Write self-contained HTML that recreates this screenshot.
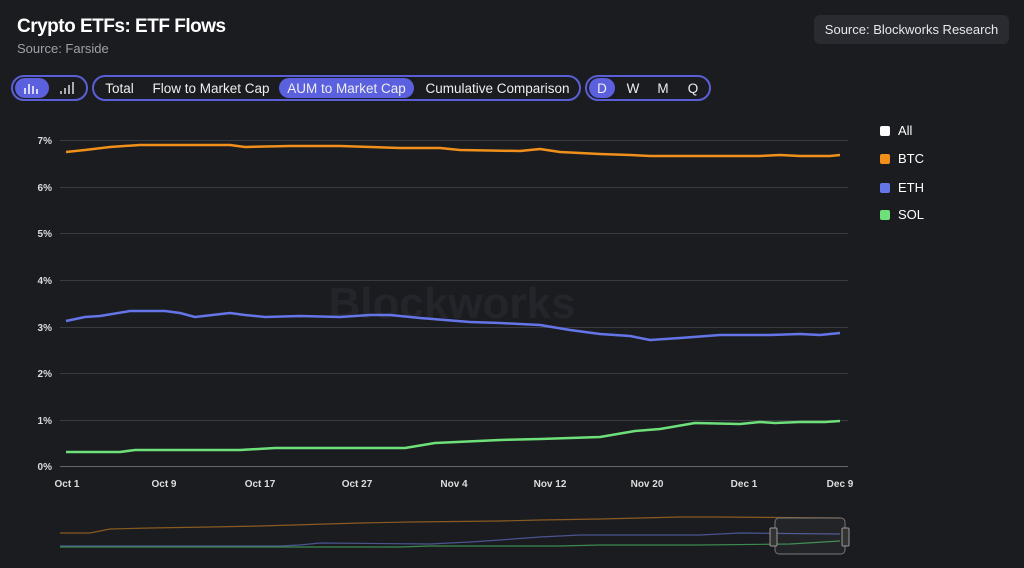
<!DOCTYPE html>
<html><head><meta charset="utf-8"><style>
body{margin:0;width:1024px;height:568px;background:#1b1c20;font-family:"Liberation Sans",sans-serif;overflow:hidden;position:relative;color:#fff}
.t{position:absolute;left:17px;top:16px;font-size:19px;font-weight:bold;letter-spacing:-0.5px}
.s{position:absolute;left:17px;top:41px;font-size:13px;color:#a0a0a8}
.src{position:absolute;left:814px;top:15px;width:195px;height:29px;background:#2a2b31;border-radius:6px;font-size:13px;line-height:29px;text-align:center;color:#e8e8ea}
.grp{position:absolute;top:75px;height:26px;border:2px solid #5b5fd6;border-radius:14px;box-sizing:border-box}
.b{position:absolute;top:78px;height:20px;line-height:22px;font-size:13.5px;color:#eee;white-space:nowrap;text-align:center}
.on{background:#5b61de;border-radius:10px}
.lg{position:absolute;left:880px;font-size:13px;display:flex;align-items:center}
.lg i{width:10px;height:10px;border-radius:2px;margin-right:8px;display:inline-block}
</style></head><body>
<div class="t">Crypto ETFs: ETF Flows</div>
<div class="s">Source: Farside</div>
<div class="src">Source: Blockworks Research</div>
<div class="grp" style="left:11px;width:77px"></div>
<div class="grp" style="left:92px;width:489px"></div>
<div class="grp" style="left:585px;width:126px"></div>
<div class="b on" style="left:15px;width:34px"><svg width="20" height="14" style="margin-top:3px"><g stroke="#fff" stroke-width="1.5"><line x1="3" y1="13" x2="3" y2="7"/><line x1="7" y1="13" x2="7" y2="3"/><line x1="11" y1="13" x2="11" y2="5"/><line x1="15" y1="13" x2="15" y2="8"/></g></svg></div>
<div class="b" style="left:56px;width:24px"><svg width="20" height="14" style="margin-top:3px"><g stroke="#ddd" stroke-width="1.5"><line x1="3" y1="13" x2="3" y2="10"/><line x1="7" y1="13" x2="7" y2="7"/><line x1="11" y1="13" x2="11" y2="4"/><line x1="15" y1="13" x2="15" y2="1"/></g></svg></div>
<div class="b" style="left:103px;width:33px">Total</div>
<div class="b" style="left:150px;width:122px">Flow to Market Cap</div>
<div class="b on" style="left:279px;width:135px">AUM to Market Cap</div>
<div class="b" style="left:424px;width:147px">Cumulative Comparison</div>
<div class="b on" style="left:589px;width:26px">D</div>
<div class="b" style="left:622px;width:22px">W</div>
<div class="b" style="left:652px;width:22px">M</div>
<div class="b" style="left:682px;width:22px">Q</div>
<svg style="position:absolute;left:0;top:0" width="1024" height="568">
<g stroke="#3a3b40" stroke-width="1">
<line x1="60" y1="140.5" x2="848" y2="140.5"/><line x1="60" y1="187.5" x2="848" y2="187.5"/><line x1="60" y1="233.5" x2="848" y2="233.5"/><line x1="60" y1="280.5" x2="848" y2="280.5"/><line x1="60" y1="327.5" x2="848" y2="327.5"/><line x1="60" y1="373.5" x2="848" y2="373.5"/><line x1="60" y1="420.5" x2="848" y2="420.5"/></g>
<line x1="60" y1="466.5" x2="848" y2="466.5" stroke="#666"/>
<text x="452" y="318" font-size="44" font-weight="bold" fill="#24252a" text-anchor="middle" font-family="Liberation Sans">Blockworks</text>
<g font-size="10" font-weight="bold" fill="#ddd" text-anchor="end"><text x="52" y="144">7%</text><text x="52" y="191">6%</text><text x="52" y="237">5%</text><text x="52" y="284">4%</text><text x="52" y="331">3%</text><text x="52" y="377">2%</text><text x="52" y="424">1%</text><text x="52" y="470">0%</text></g>
<g font-size="10" font-weight="bold" fill="#ddd" text-anchor="middle"><text x="67" y="487">Oct 1</text><text x="164" y="487">Oct 9</text><text x="260" y="487">Oct 17</text><text x="357" y="487">Oct 27</text><text x="454" y="487">Nov 4</text><text x="550" y="487">Nov 12</text><text x="647" y="487">Nov 20</text><text x="744" y="487">Dec 1</text><text x="840" y="487">Dec 9</text></g>
<g fill="none" stroke-width="2.5" stroke-linejoin="round">
<polyline stroke="#f0901a" points="66,152 85,150 110,147 140,145 230,145 245,147 290,146 340,146 400,148 440,148 460,150 520,151 540,149 560,152 600,154 630,155 650,156 760,156 780,155 800,156 830,156 840,155"/>
<polyline stroke="#6475e8" points="66,321 85,317 100,316 130,311 165,311 180,313 195,317 230,313 245,315 265,317 300,316 340,317 370,315 390,315 420,318 470,322 500,323 540,325 570,330 600,334 630,336 650,340 680,338 720,335 770,335 800,334 820,335 840,333"/>
<polyline stroke="#6ee07a" points="66,452 120,452 135,450 240,450 275,448 405,448 435,443 500,440 540,439 600,437 635,431 660,429 695,423 740,424 760,422 775,423 800,422 825,422 840,421"/>
</g>
<g fill="none" stroke-width="1.2">
<polyline stroke="#8a5a20" points="60,533 90,533 110,529 150,528 210,527 260,526 360,523 410,522 500,521 540,520 600,519 640,518 680,517 720,517 840,518"/>
<polyline stroke="#4a5590" points="60,546 280,546 300,545 320,543 430,544 470,542 500,540 540,537 580,535 640,535 700,535 740,533 840,534"/>
<polyline stroke="#3d8a50" points="60,547 400,547 430,546 500,546 560,546 600,545 650,545 700,545 790,544 840,541"/>
</g>
<rect x="775" y="518" width="70" height="36" rx="4" fill="rgba(255,255,255,0.04)" stroke="#777"/>
<rect x="770" y="528" width="7" height="18" rx="1" fill="#333" stroke="#999"/>
<rect x="842" y="528" width="7" height="18" rx="1" fill="#333" stroke="#999"/>
</svg>
<div class="lg" style="top:123px"><i style="background:#fff"></i>All</div>
<div class="lg" style="top:151px"><i style="background:#f0901a"></i>BTC</div>
<div class="lg" style="top:180px"><i style="background:#6475e8"></i>ETH</div>
<div class="lg" style="top:207px"><i style="background:#6ee07a"></i>SOL</div>
</body></html>
